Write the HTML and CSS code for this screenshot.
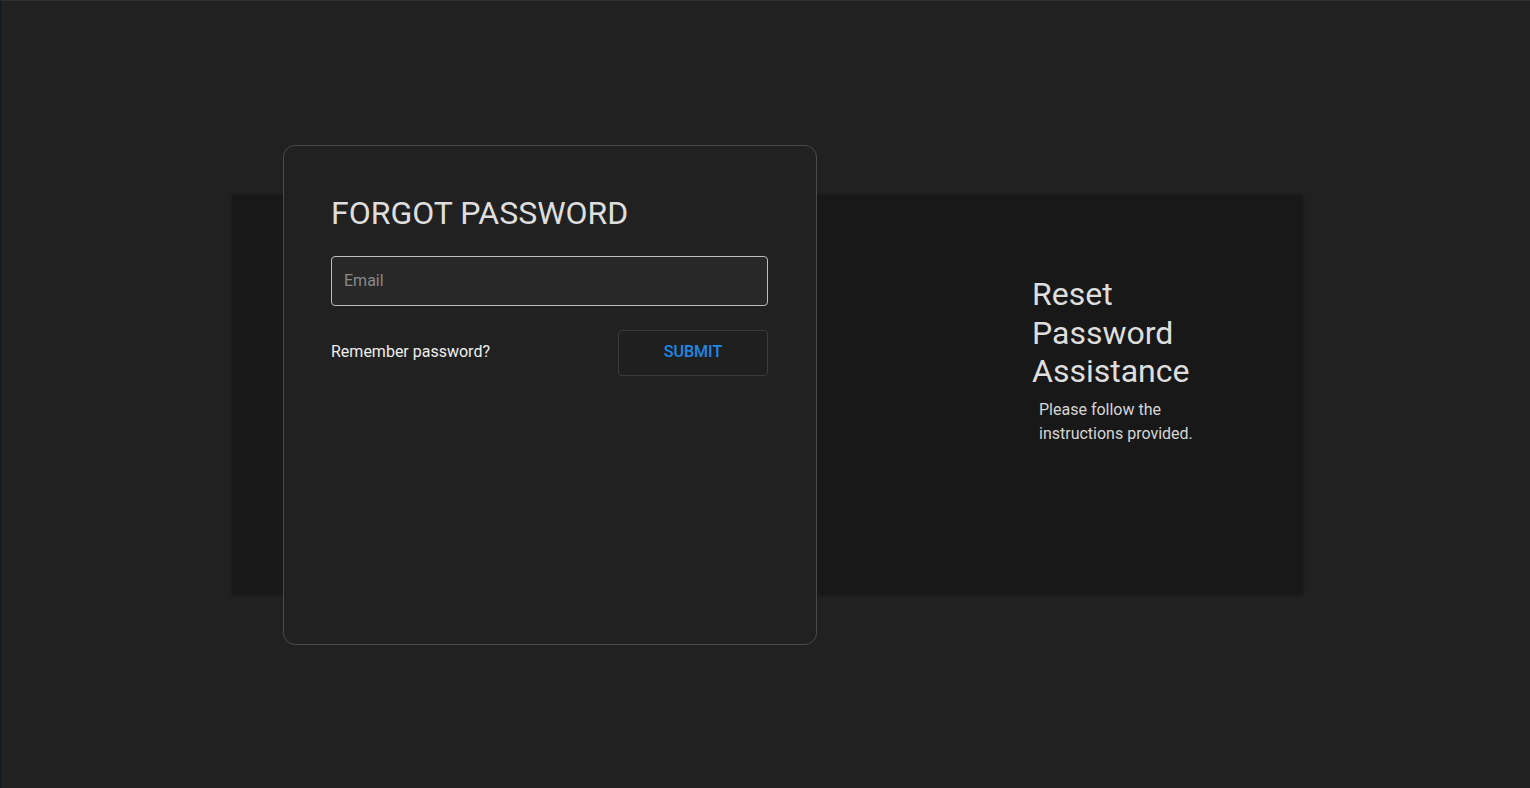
FILE: index.html
```html
<!DOCTYPE html>
<html lang="en">
<head>
<meta charset="utf-8">
<title>Forgot Password</title>
<link rel="stylesheet" href="styles.css">
</head>
<body>
<div class="page">
  <section class="panel">
    <div class="card">
      <h1 class="card-title">FORGOT PASSWORD</h1>
      <div class="field">
        <input class="input" type="email" placeholder="Email">
      </div>
      <div class="actions">
        <span class="remember">Remember password?</span>
        <button class="submit" type="button">SUBMIT</button>
      </div>
    </div>
    <div class="info">
      <h2 class="info-title">Reset Password Assistance</h2>
      <p class="info-text">Please follow the instructions provided.</p>
    </div>
  </section>
</div>
</body>
</html>
```
FILE: styles.css
```css
* { box-sizing: border-box; }
html, body { margin: 0; padding: 0; }
body {
  background: #212121;
  font-family: Roboto, "Liberation Sans", Arial, sans-serif;
  color: #dcdcdc;
}
.page {
  height: 788px;
  border-top: 1px solid #303030;
  border-left: 2px solid #141b22;
  padding-top: 194px;
  padding-left: 230px;
}
.panel {
  width: 1071px;
  height: 400px;
  background: #181818;
  box-shadow: 0 0 3px rgba(0,0,0,0.35);
  display: flex;
  align-items: center;
  padding-left: 51px;
}
.card {
  flex: 0 0 534px;
  height: 500px;
  background: #212121;
  border: 1px solid #4a4a4a;
  border-radius: 12px;
  padding: 48px 48px 0 47px;
  display: flex;
  flex-direction: column;
}
.card-title {
  margin: 0;
  font-size: 32px;
  line-height: 38px;
  font-weight: 400;
  color: #dedede;
}
.field { margin-top: 24px; }
.input {
  display: block;
  width: 100%;
  height: 50px;
  background: #282828;
  border: 1px solid #bdbdbd;
  border-radius: 4px;
  padding: 0 12px 2px;
  font-family: inherit;
  font-size: 16px;
  color: #ddd;
  outline: none;
}
.input::placeholder { color: #8a8a8a; }
.actions {
  margin-top: 24px;
  display: flex;
  align-items: center;
  justify-content: space-between;
}
.remember {
  font-size: 16px;
  color: #eeeeee;
  padding-bottom: 4px;
}
.submit {
  width: 150px;
  height: 46px;
  background: #1f1f1f;
  border: 1px solid #3b3b3b;
  border-radius: 4px;
  padding: 0 0 3px;
  color: #1e88e5;
  font-family: inherit;
  font-size: 16px;
  font-weight: 500;
  letter-spacing: 0;
  cursor: pointer;
}
.info {
  align-self: flex-start;
  margin-top: 80px;
  margin-left: 215px;
  width: 172px;
}
.info-title {
  margin: 0;
  font-size: 32px;
  line-height: 38.5px;
  font-weight: 400;
  color: #dedede;
}
.info-text {
  margin: 7px 0 0 7px;
  font-size: 16px;
  line-height: 24px;
  color: #d6d6d6;
}
```
